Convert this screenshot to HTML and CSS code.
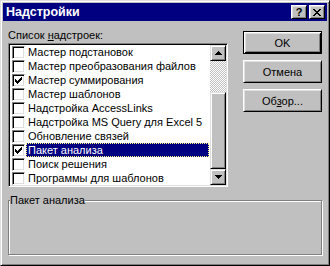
FILE: index.html
```html
<!DOCTYPE html>
<html>
<head>
<meta charset="utf-8">
<title>Надстройки</title>
<link rel="stylesheet" href="styles.css">
</head>
<body>
<div class="window">
  <div class="titlebar">
    <span class="title">Надстройки</span>
    <div class="caption-btns">
      <span class="cap-btn help">?</span>
      <span class="cap-btn close"><svg width="8" height="7" viewBox="0 0 8 7" shape-rendering="crispEdges"><path d="M0 0h2v1H0z M6 0h2v1H6z M1 1h2v1H1z M5 1h2v1H5z M2 2h4v1H2z M3 3h2v1H3z M2 4h4v1H2z M1 5h2v1H1z M5 5h2v1H5z M0 6h2v1H0z M6 6h2v1H6z" fill="#000"/></svg></span>
    </div>
  </div>
  <div class="client">
    <div class="top">
      <div class="left">
        <div class="label">Список <u>н</u>адстроек:</div>
        <div class="listbox">
          <ul class="items">
            <li class="row"><span class="cb"></span><span class="txt">Мастер подстановок</span></li>
            <li class="row"><span class="cb"></span><span class="txt">Мастер преобразования файлов</span></li>
            <li class="row"><span class="cb"><svg class="check" width="7" height="7" viewBox="0 0 7 7" shape-rendering="crispEdges"><path d="M0 2h1v3H0z M1 3h1v3H1z M2 4h1v3H2z M3 3h1v3H3z M4 2h1v3H4z M5 1h1v3H5z M6 0h1v3H6z" fill="#000"/></svg></span><span class="txt">Мастер суммирования</span></li>
            <li class="row"><span class="cb"></span><span class="txt">Мастер шаблонов</span></li>
            <li class="row"><span class="cb"></span><span class="txt">Надстройка AccessLinks</span></li>
            <li class="row"><span class="cb"></span><span class="txt">Надстройка MS Query для Excel 5</span></li>
            <li class="row"><span class="cb"></span><span class="txt">Обновление связей</span></li>
            <li class="row selected"><span class="cb"><svg class="check" width="7" height="7" viewBox="0 0 7 7" shape-rendering="crispEdges"><path d="M0 2h1v3H0z M1 3h1v3H1z M2 4h1v3H2z M3 3h1v3H3z M4 2h1v3H4z M5 1h1v3H5z M6 0h1v3H6z" fill="#000"/></svg></span><span class="txt">Пакет анализа</span></li>
            <li class="row"><span class="cb"></span><span class="txt">Поиск решения</span></li>
            <li class="row"><span class="cb"></span><span class="txt">Программы для шаблонов</span></li>
          </ul>
          <div class="scrollbar">
            <div class="sb-btn"><svg width="7" height="4" viewBox="0 0 7 4" shape-rendering="crispEdges"><path d="M3 0h1v1h1v1h1v1h1v1H0V3h1V2h1V1h1z" fill="#000"/></svg></div>
            <div class="track"><div class="thumb"></div></div>
            <div class="sb-btn"><svg width="7" height="4" viewBox="0 0 7 4" shape-rendering="crispEdges"><path d="M0 0h7v1H6v1H5v1H4v1H3V3H2V2H1V1H0z" fill="#000"/></svg></div>
          </div>
        </div>
      </div>
      <div class="right">
        <button class="btn default">OK</button>
        <button class="btn">Отмена</button>
        <button class="btn">Об<u>з</u>ор...</button>
      </div>
    </div>
    <fieldset class="group">
      <legend class="group-title">Пакет анализа</legend>
    </fieldset>
  </div>
</div>
</body>
</html>
```
FILE: styles.css
```css
* { box-sizing: border-box; }
html, body { margin: 0; padding: 0; }
body {
  width: 330px;
  height: 266px;
  background: #c0c0c0;
  font-family: "Liberation Sans", Arial, sans-serif;
  font-size: 11px;
  color: #000;
}
.window {
  width: 330px;
  height: 266px;
  background: #c0c0c0;
  border: 1px solid;
  border-color: #dfdfdf #000 #000 #dfdfdf;
  box-shadow: inset 1px 1px #fff, inset -1px -1px #808080;
  padding: 2px;
  display: flex;
  flex-direction: column;
}
.titlebar {
  height: 18px;
  background: #000080;
  display: flex;
  align-items: center;
  justify-content: space-between;
  padding: 0 2px 0 3px;
  flex: none;
}
.title {
  color: #fff;
  font-weight: bold;
  font-size: 12.5px;
  line-height: 14px;
}
.caption-btns {
  display: flex;
  gap: 2px;
}
.cap-btn {
  width: 16px;
  height: 14px;
  background: #c0c0c0;
  border: 1px solid;
  border-color: #fff #000 #000 #fff;
  box-shadow: inset 1px 1px #dfdfdf, inset -1px -1px #808080;
  display: flex;
  align-items: center;
  justify-content: center;
  font-weight: bold;
  font-size: 11px;
  line-height: 12px;
}
.client {
  flex: 1;
  padding: 8px 5px 0 5px;
  display: flex;
  flex-direction: column;
}
.top {
  display: flex;
  justify-content: space-between;
}
.left {
  width: 220px;
  display: flex;
  flex-direction: column;
}
.label {
  height: 13px;
  line-height: 13px;
  margin-bottom: 1px;
}
.listbox {
  width: 220px;
  height: 144px;
  display: flex;
  background: #fff;
  border: 1px solid;
  border-color: #808080 #fff #fff #808080;
  box-shadow: inset 1px 1px #000, inset -1px -1px #dfdfdf;
  padding: 1px;
}
.items {
  list-style: none;
  margin: 0;
  padding: 0;
  flex: 1;
  min-width: 0;
  display: flex;
  flex-direction: column;
}
.row {
  height: 14px;
  display: flex;
  align-items: center;
  padding-left: 2px;
}
.cb {
  width: 13px;
  height: 13px;
  flex: none;
  background: #fff;
  border: 1px solid;
  border-color: #808080 #fff #fff #808080;
  box-shadow: inset 1px 1px #000, inset -1px -1px #dfdfdf;
  padding: 2px;
  display: flex;
}
.txt {
  flex: 1;
  height: 14px;
  line-height: 12px;
  margin: 0 1px 0 1px;
  padding: 0 1px;
  border: 1px solid transparent;
  white-space: nowrap;
}
.selected .txt {
  background: #000080;
  color: #fff;
  border: 1px dotted #ffff80;
}
.scrollbar {
  width: 16px;
  flex: none;
  display: flex;
  flex-direction: column;
}
.sb-btn {
  width: 16px;
  height: 16px;
  flex: none;
  background: #c0c0c0;
  border: 1px solid;
  border-color: #dfdfdf #000 #000 #dfdfdf;
  box-shadow: inset 1px 1px #fff, inset -1px -1px #808080;
  display: flex;
  align-items: center;
  justify-content: center;
}
.track {
  flex: 1;
  display: flex;
  flex-direction: column;
  justify-content: flex-end;
  background-image: conic-gradient(#fff 25%, #c0c0c0 0 50%, #fff 0 75%, #c0c0c0 0);
  background-size: 2px 2px;
}
.thumb {
  height: 77px;
  background: #c0c0c0;
  border: 1px solid;
  border-color: #dfdfdf #000 #000 #dfdfdf;
  box-shadow: inset 1px 1px #fff, inset -1px -1px #808080;
}
.right {
  width: 79px;
  display: flex;
  flex-direction: column;
  gap: 6px;
  padding-top: 2px;
}
.btn {
  width: 79px;
  height: 23px;
  margin: 0;
  padding: 0;
  font-family: "Liberation Sans", Arial, sans-serif;
  font-size: 11px;
  color: #000;
  background: #c0c0c0;
  border: 1px solid;
  border-color: #fff #000 #000 #fff;
  box-shadow: inset 1px 1px #dfdfdf, inset -1px -1px #808080;
}
.btn.default {
  border: 1px solid #000;
  box-shadow: inset 1px 1px #fff, inset -1px -1px #000, inset 2px 2px #dfdfdf, inset -2px -2px #808080;
}
.group {
  margin: 7px 0 0 0;
  padding: 0;
  height: 61px;
  border: 1px solid #808080;
  box-shadow: 1px 1px 0 #fff, inset 1px 1px 0 #fff;
  min-width: 0;
}
.group-title {
  margin-left: 1px;
  padding: 0;
  line-height: 13px;
  background: #c0c0c0;
}
```
